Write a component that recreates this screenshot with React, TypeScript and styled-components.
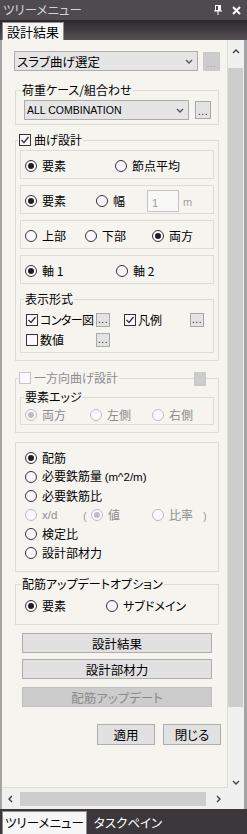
import React from "react";
import styled, { createGlobalStyle } from "styled-components";

const BG = "#f5f4ef";

const GlobalStyle = createGlobalStyle`
  html, body { margin: 0; padding: 0; background: ${BG}; }
  body {
    font-family: "Noto Sans CJK JP", "Liberation Sans", sans-serif;
    font-size: 12px;
    font-feature-settings: "palt";
    color: #000;
  }
`;

const Window = styled.div`
  width: 247px;
  height: 834px;
  display: flex;
  flex-direction: column;
  background: #3b373a;
  overflow: hidden;
`;

const TitleBar = styled.div`
  height: 20px;
  flex: none;
  display: flex;
  align-items: center;
  padding: 0 6px 0 3px;
  background: #4f4a4e;
  color: #d4d4d4;
  font-size: 12.5px;
  line-height: 20px;
`;

const TitleText = styled.span`
  flex: 1;
`;

const TitleIcons = styled.div`
  display: flex;
  align-items: center;
  gap: 10px;
`;

const TabStrip = styled.div`
  height: 20px;
  flex: none;
  display: flex;
  align-items: flex-end;
  padding-left: 2px;
  background: linear-gradient(#2b272a, #565155);
`;

const TopTab = styled.div`
  height: 18px;
  box-sizing: border-box;
  padding: 0 4px;
  background: #f6f6f6;
  border: 1px solid #8d8d8d;
  border-bottom: none;
  font-size: 13px;
  line-height: 17px;
`;

const Body = styled.div`
  flex: none;
  display: flex;
  flex-direction: column;
  border-left: 2px solid #a3a3a3;
  border-right: 3px solid #a3a3a3;
  background: #f0f0f0;
`;

const Main = styled.div`
  height: 748px;
  display: flex;
`;

const Content = styled.div`
  width: 226px;
  box-sizing: border-box;
  flex: none;
  display: flex;
  flex-direction: column;
  align-items: flex-start;
  padding: 11px 0 0 13px;
  background: ${BG};
  border-right: 1px solid #dcdcd8;
  border-bottom: 1px solid #dcdcd8;
  overflow: hidden;
`;

const VScroll = styled.div`
  width: 16px;
  flex: none;
  display: flex;
  flex-direction: column;
  background: #f0f0f0;
`;

const Arrow = styled.div<{ $h: number; $w?: number; $align?: string }>`
  height: ${(p) => p.$h}px;
  width: ${(p) => (p.$w ? p.$w + "px" : "auto")};
  flex: none;
  display: flex;
  justify-content: center;
  align-items: ${(p) => p.$align ?? "center"};
`;

const VThumb = styled.div`
  width: 15px;
  height: 651px;
  background: #cdcdcd;
`;

const HScroll = styled.div`
  height: 21px;
  display: flex;
  align-items: flex-start;
  padding-top: 4px;
  box-sizing: border-box;
  background: #f0f0f0;
`;

const HThumb = styled.div`
  width: 186px;
  height: 14px;
  margin-left: 1px;
  background: #cdcdcd;
`;

const BottomBar = styled.div`
  flex: 1;
  display: flex;
  align-items: flex-end;
  gap: 5px;
  padding-left: 2px;
  background: #3b373a;
  color: #ffffff;
  font-size: 12.5px;
`;

const BottomTab = styled.div<{ $active?: boolean }>`
  height: ${(p) => (p.$active ? 23 : 22)}px;
  box-sizing: border-box;
  padding: 0 2px;
  line-height: 21px;
  background: ${(p) => (p.$active ? "#f6f6f6" : "transparent")};
  color: ${(p) => (p.$active ? "#000" : "#fff")};
  border: ${(p) => (p.$active ? "1px solid #8d8d8d" : "none")};
  border-bottom: none;
`;

/* ---------- form parts ---------- */

const Row = styled.div<{ $h?: number; $ml?: number; $mt?: number; $gap?: number }>`
  display: flex;
  align-items: center;
  height: ${(p) => p.$h ?? 20}px;
  margin-left: ${(p) => p.$ml ?? 0}px;
  margin-top: ${(p) => p.$mt ?? 0}px;
  gap: ${(p) => p.$gap ?? 0}px;
  flex: none;
`;

const Combo = styled.div<{ $w: number }>`
  width: ${(p) => p.$w}px;
  height: 20px;
  box-sizing: border-box;
  display: flex;
  align-items: center;
  justify-content: space-between;
  padding: 0 4px 0 2px;
  background: #e5e5e5;
  border: 1px solid #acacac;
  font-size: 12.5px;
  white-space: nowrap;
`;

const Latin = styled.span<{ $size?: number }>`
  font-family: "Liberation Sans", sans-serif;
  font-size: ${(p) => p.$size ?? 11}px;
`;

const Tight = styled.span`
  letter-spacing: -0.6px;
`;

const Dots = styled.div<{ $w: number; $h: number; $off?: boolean }>`
  width: ${(p) => p.$w}px;
  height: ${(p) => p.$h}px;
  box-sizing: border-box;
  flex: none;
  display: flex;
  align-items: flex-end;
  justify-content: center;
  padding-bottom: 2px;
  background: ${(p) => (p.$off ? "#cccccc" : "#e3e3e3")};
  border: 1px solid ${(p) => (p.$off ? "#c9c9c9" : "#a8a8a8")};
  color: ${(p) => (p.$off ? "#9a9a9a" : "#202020")};
  font-family: "Liberation Sans", sans-serif;
  font-size: 10px;
  line-height: 8px;
  letter-spacing: 0.5px;
`;

const Group = styled.div<{ $w?: number; $mt?: number; $pad?: string }>`
  position: relative;
  box-sizing: border-box;
  width: ${(p) => p.$w ?? 204}px;
  margin-top: ${(p) => p.$mt ?? 0}px;
  padding: ${(p) => p.$pad ?? "0"};
  border: 1px solid #dcdbd5;
  display: flex;
  flex-direction: column;
  align-items: flex-start;
  flex: none;
`;

const Legend = styled.div<{ $x: number; $mb: number; $off?: boolean }>`
  display: flex;
  align-items: center;
  gap: 3px;
  height: 14px;
  margin: -8px 0 ${(p) => p.$mb}px ${(p) => p.$x}px;
  padding: 0 1px;
  background: ${BG};
  line-height: 14px;
  color: ${(p) => (p.$off ? "#8d8d8d" : "#000")};
  white-space: nowrap;
`;

const CornerBtn = styled.div`
  position: absolute;
  top: -7px;
  right: 12px;
`;

const Box = styled.div<{ $mt?: number }>`
  width: 194px;
  height: 29px;
  box-sizing: border-box;
  margin-top: ${(p) => p.$mt ?? 0}px;
  padding: 2px 0 0 4px;
  border: 1px solid #dcdbd5;
  display: flex;
  align-items: center;
  flex: none;
`;

const Option = styled.label<{ $w?: number; $off?: boolean; $gap?: number }>`
  display: flex;
  align-items: center;
  gap: ${(p) => p.$gap ?? 5}px;
  width: ${(p) => (p.$w ? p.$w + "px" : "auto")};
  flex: none;
  line-height: 14px;
  white-space: nowrap;
  color: ${(p) => (p.$off ? "#8d8d8d" : "#000")};
`;

const RadioDot = styled.span<{ $on?: boolean; $off?: boolean }>`
  width: 12px;
  height: 12px;
  box-sizing: border-box;
  border-radius: 50%;
  border: 1px solid ${(p) => (p.$off ? "#bdbdbd" : "#333")};
  background: #fdf7fd;
  display: inline-flex;
  align-items: center;
  justify-content: center;
  flex: none;

  &::after {
    content: "";
    width: 6px;
    height: 6px;
    border-radius: 50%;
    background: ${(p) => (p.$off ? "#bdbdbd" : "#1e1e1e")};
    display: ${(p) => (p.$on ? "block" : "none")};
  }
`;

const CheckBox = styled.span<{ $off?: boolean }>`
  width: 12px;
  height: 12px;
  box-sizing: border-box;
  border: 1px solid ${(p) => (p.$off ? "#c6c6c6" : "#333")};
  background: #fdf8fd;
  display: inline-flex;
  align-items: center;
  justify-content: center;
  flex: none;
`;

const Paren = styled.span<{ $w?: number }>`
  width: ${(p) => (p.$w ? p.$w + "px" : "auto")};
  color: #9a9a9a;
  flex: none;
`;

const NumBox = styled.div`
  width: 32px;
  height: 22px;
  box-sizing: border-box;
  padding: 2px 0 0 4px;
  border: 1px solid #c3c3c3;
  background: #f8f8f6;
  color: #9a9a9a;
  flex: none;
`;

const Unit = styled.span`
  margin-left: 4px;
  color: #a0a0a0;
  font-family: "Liberation Sans", sans-serif;
  font-size: 11px;
  padding-top: 3px;
`;

const Button = styled.div<{ $w: number; $h?: number; $mt?: number; $ml?: number; $off?: boolean }>`
  width: ${(p) => p.$w}px;
  height: ${(p) => p.$h ?? 20}px;
  box-sizing: border-box;
  margin-top: ${(p) => p.$mt ?? 0}px;
  margin-left: ${(p) => p.$ml ?? 0}px;
  display: flex;
  align-items: center;
  justify-content: center;
  background: ${(p) => (p.$off ? "#cccccc" : "#e1e1e1")};
  border: 1px solid ${(p) => (p.$off ? "#bfbfbf" : "#adadad")};
  color: ${(p) => (p.$off ? "#8a8a8a" : "#000")};
  font-size: 12.5px;
  flex: none;
`;

/* ---------- small drawings ---------- */

const Chevron = ({ dir, color = "#555" }: { dir: "up" | "down" | "left" | "right"; color?: string }) => {
  const pts = {
    down: "1,1 4,4 7,1",
    up: "1,4 4,1 7,4",
    left: "4,1 1,4 4,7",
    right: "1,1 4,4 1,7",
  }[dir];
  const vertical = dir === "up" || dir === "down";
  return (
    <svg width={vertical ? 8 : 5} height={vertical ? 5 : 8} viewBox={vertical ? "0 0 8 5" : "0 0 5 8"}>
      <polyline points={pts} fill="none" stroke={color} strokeWidth="1.4" />
    </svg>
  );
};

const Radio = ({ label, on, off, w }: { label: React.ReactNode; on?: boolean; off?: boolean; w?: number }) => (
  <Option $w={w} $off={off}>
    <RadioDot $on={on} $off={off} />
    {label}
  </Option>
);

const Check = ({ label, on, off, w, gap = 2 }: { label: React.ReactNode; on?: boolean; off?: boolean; w?: number; gap?: number }) => (
  <Option $w={w} $off={off} $gap={gap}>
    <CheckBox $off={off}>
      {on && (
        <svg width="10" height="10" viewBox="0 0 10 10">
          <polyline points="1.5,5 4,7.5 8.5,2" fill="none" stroke="#333" strokeWidth="1.3" />
        </svg>
      )}
    </CheckBox>
    {label}
  </Option>
);

const Pin = () => (
  <svg width="8" height="10" viewBox="0 0 8 10">
    <rect x="1.5" y="0.5" width="5" height="5" fill="none" stroke="#fff" />
    <rect x="4" y="1" width="2" height="4" fill="#fff" />
    <line x1="0" y1="6" x2="8" y2="6" stroke="#fff" />
    <line x1="4" y1="6" x2="4" y2="10" stroke="#fff" />
  </svg>
);

const Close = () => (
  <svg width="9" height="9" viewBox="0 0 9 9">
    <path d="M1 1 L8 8 M8 1 L1 8" stroke="#fff" strokeWidth="2" />
  </svg>
);

export default function App() {
  return (
    <>
      <GlobalStyle />
      <Window>
        <TitleBar>
          <TitleText>ツリーメニュー</TitleText>
          <TitleIcons>
            <Pin />
            <Close />
          </TitleIcons>
        </TitleBar>
        <TabStrip>
          <TopTab>設計結果</TopTab>
        </TabStrip>

        <Body>
          <Main>
            <Content>
              <Row $ml={-1} $gap={5}>
                <Combo $w={184}>
                  スラブ曲げ選定
                  <Chevron dir="down" />
                </Combo>
                <Dots $w={17} $h={19} $off>...</Dots>
              </Row>

              {/* 荷重ケース */}
              <Group $mt={19} $pad="0 8px 4px 8px">
                <Legend $x={-3} $mb={3}>荷重ケース/組合わせ</Legend>
                <Row $gap={6}>
                  <Combo $w={165}>
                    <Latin $size={10.5}>ALL COMBINATION</Latin>
                    <Chevron dir="down" />
                  </Combo>
                  <Dots $w={16} $h={18}>...</Dots>
                </Row>
              </Group>

              {/* 曲げ設計 */}
              <Group $mt={15} $pad="0 4px 7px 4px">
                <Legend $x={-2} $mb={3}>
                  <Check label="曲げ設計" on gap={3} />
                </Legend>
                <Box>
                  <Radio label="要素" on w={90} />
                  <Radio label="節点平均" />
                </Box>
                <Box $mt={6}>
                  <Radio label="要素" on w={71} />
                  <Radio label="幅" w={51} />
                  <NumBox>
                    <Latin $size={11}>1</Latin>
                  </NumBox>
                  <Unit>m</Unit>
                </Box>
                <Box $mt={6}>
                  <Radio label="上部" w={60} />
                  <Radio label="下部" w={67} />
                  <Radio label="両方" on />
                </Box>
                <Box $mt={6}>
                  <Radio label="軸 1" on w={91} />
                  <Radio label="軸 2" />
                </Box>
                <Group $w={194} $mt={15} $pad="0 0 2px 5px">
                  <Legend $x={-2} $mb={4}>表示形式</Legend>
                  <Row>
                    <Check label={<Tight>コンター図</Tight>} on w={70} />
                    <Dots $w={14} $h={14}>...</Dots>
                    <Paren $w={14} />
                    <Check label="凡例" on w={66} />
                    <Dots $w={14} $h={14}>...</Dots>
                  </Row>
                  <Row>
                    <Check label="数値" w={70} />
                    <Dots $w={14} $h={14}>...</Dots>
                  </Row>
                </Group>
              </Group>

              {/* 一方向曲げ設計 */}
              <Group $mt={17} $pad="0 4px 7px 4px">
                <Legend $x={-2} $mb={0} $off>
                  <Check label="一方向曲げ設計" off gap={3} />
                </Legend>
                <CornerBtn>
                  <Dots $w={12} $h={14} $off>
                    {""}
                  </Dots>
                </CornerBtn>
                <Group $w={194} $mt={12} $pad="0 0 0 4px">
                  <Legend $x={-1} $mb={2}>要素エッジ</Legend>
                  <Row $h={18}>
                    <Radio label="両方" on off w={65} />
                    <Radio label="左側" off w={62} />
                    <Radio label="右側" off />
                  </Row>
                </Group>
              </Group>

              {/* 表示項目 */}
              <Group $mt={9} $pad="5px 0 9px 9px">
                <Row $h={19}>
                  <Radio label="配筋" on />
                </Row>
                <Row $h={19}>
                  <Radio
                    label={
                      <span>
                        必要鉄筋量 <Latin $size={11.5}>(m^2/m)</Latin>
                      </span>
                    }
                  />
                </Row>
                <Row $h={19}>
                  <Radio label="必要鉄筋比" />
                </Row>
                <Row $h={19}>
                  <Radio label={<Latin $size={11.5}>x/d</Latin>} off w={58} />
                  <Paren $w={8}>
                    <Latin $size={11}>(</Latin>
                  </Paren>
                  <Radio label="値" on off w={61} />
                  <Radio label="比率" off w={51} />
                  <Paren>
                    <Latin $size={11}>)</Latin>
                  </Paren>
                </Row>
                <Row $h={19}>
                  <Radio label="検定比" />
                </Row>
                <Row $h={19}>
                  <Radio label="設計部材力" />
                </Row>
              </Group>

              {/* 配筋アップデートオプション */}
              <Group $mt={12} $pad="0 0 8px 9px">
                <Legend $x={-4} $mb={5}>配筋アップデートオプション</Legend>
                <Row>
                  <Radio label="要素" on w={81} />
                  <Radio label="サブドメイン" />
                </Row>
              </Group>

              <Button $w={190} $mt={8} $ml={7}>設計結果</Button>
              <Button $w={190} $mt={6} $ml={7}>設計部材力</Button>
              <Button $w={190} $mt={8} $ml={7} $off>配筋アップデート</Button>

              <Row $h={21} $mt={17} $ml={82} $gap={8}>
                <Button $w={58} $h={21}>適用</Button>
                <Button $w={58} $h={21}>閉じる</Button>
              </Row>
            </Content>

            <VScroll>
              <Arrow $h={19} $align="flex-start" style={{ paddingTop: 9 }}>
                <Chevron dir="up" color="#404040" />
              </Arrow>
              <VThumb />
              <Arrow $h={78} $align="flex-end" style={{ paddingBottom: 3 }}>
                <Chevron dir="down" color="#404040" />
              </Arrow>
            </VScroll>
          </Main>

          <HScroll>
            <Arrow $h={14} $w={17}>
              <Chevron dir="left" color="#404040" />
            </Arrow>
            <HThumb />
            <Arrow $h={14} $w={24}>
              <Chevron dir="right" color="#404040" />
            </Arrow>
          </HScroll>
        </Body>

        <BottomBar>
          <BottomTab $active>ツリーメニュー</BottomTab>
          <BottomTab>タスクペイン</BottomTab>
        </BottomBar>
      </Window>
    </>
  );
}
